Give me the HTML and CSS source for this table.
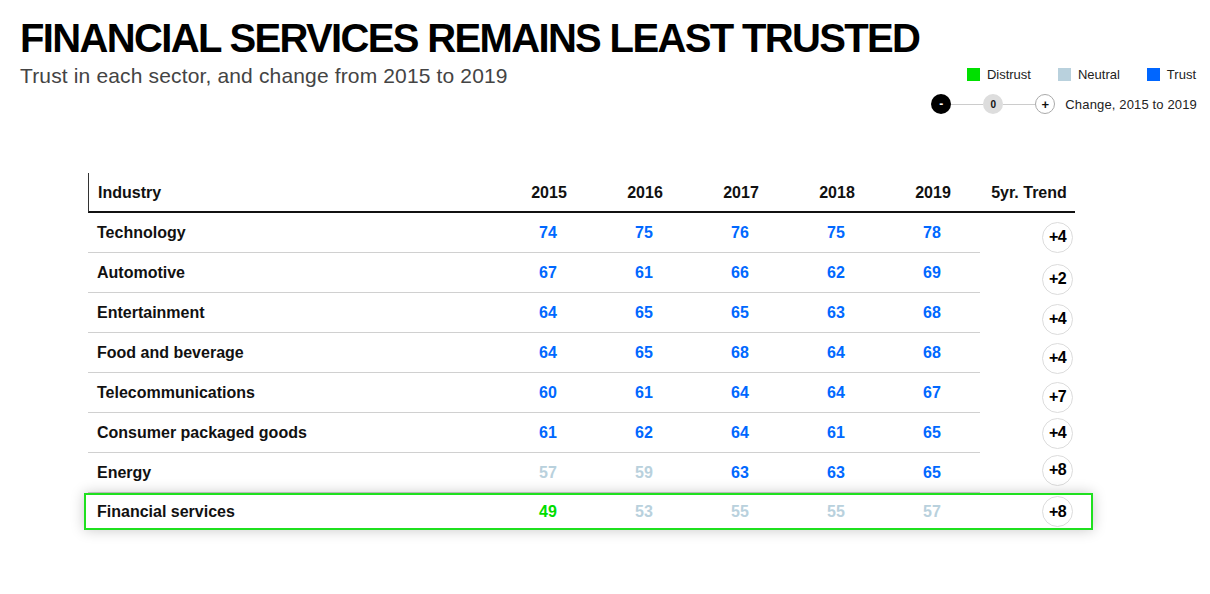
FILE: index.html
```html
<!DOCTYPE html>
<html>
<head>
<meta charset="utf-8">
<link rel="stylesheet" href="styles.css">
</head>
<body>
<header class="top">
  <div class="titles">
    <h1 class="title">FINANCIAL SERVICES REMAINS LEAST TRUSTED</h1>
    <p class="subtitle">Trust in each sector, and change from 2015 to 2019</p>
  </div>
  <div class="legend">
    <div class="legend-row">
      <span class="key"><span class="sq sq-distrust"></span>Distrust</span>
      <span class="key"><span class="sq sq-neutral"></span>Neutral</span>
      <span class="key"><span class="sq sq-trust"></span>Trust</span>
    </div>
    <div class="change-row">
      <span class="dot dot-minus">-</span>
      <span class="link"></span>
      <span class="dot dot-zero">0</span>
      <span class="link"></span>
      <span class="dot dot-plus">+</span>
      <span class="change-label">Change, 2015 to 2019</span>
    </div>
  </div>
</header>

<div class="table">
  <div class="row head">
    <div class="cell name">Industry</div>
    <div class="cell num">2015</div>
    <div class="cell num">2016</div>
    <div class="cell num">2017</div>
    <div class="cell num">2018</div>
    <div class="cell num">2019</div>
    <div class="cell trend-h">5yr. Trend</div>
  </div>
  <div class="row body">
    <div class="cell name">Technology</div>
    <div class="cell num t">74</div><div class="cell num t">75</div><div class="cell num t">76</div><div class="cell num t">75</div><div class="cell num t">78</div>
    <div class="trend"><span class="circle">+4</span></div>
  </div>
  <div class="row body">
    <div class="cell name">Automotive</div>
    <div class="cell num t">67</div><div class="cell num t">61</div><div class="cell num t">66</div><div class="cell num t">62</div><div class="cell num t">69</div>
    <div class="trend"><span class="circle">+2</span></div>
  </div>
  <div class="row body">
    <div class="cell name">Entertainment</div>
    <div class="cell num t">64</div><div class="cell num t">65</div><div class="cell num t">65</div><div class="cell num t">63</div><div class="cell num t">68</div>
    <div class="trend"><span class="circle">+4</span></div>
  </div>
  <div class="row body">
    <div class="cell name">Food and beverage</div>
    <div class="cell num t">64</div><div class="cell num t">65</div><div class="cell num t">68</div><div class="cell num t">64</div><div class="cell num t">68</div>
    <div class="trend"><span class="circle">+4</span></div>
  </div>
  <div class="row body">
    <div class="cell name">Telecommunications</div>
    <div class="cell num t">60</div><div class="cell num t">61</div><div class="cell num t">64</div><div class="cell num t">64</div><div class="cell num t">67</div>
    <div class="trend"><span class="circle">+7</span></div>
  </div>
  <div class="row body">
    <div class="cell name">Consumer packaged goods</div>
    <div class="cell num t">61</div><div class="cell num t">62</div><div class="cell num t">64</div><div class="cell num t">61</div><div class="cell num t">65</div>
    <div class="trend"><span class="circle">+4</span></div>
  </div>
  <div class="row body">
    <div class="cell name">Energy</div>
    <div class="cell num n">57</div><div class="cell num n">59</div><div class="cell num t">63</div><div class="cell num t">63</div><div class="cell num t">65</div>
    <div class="trend"><span class="circle">+8</span></div>
  </div>
  <div class="row highlight">
    <div class="cell name">Financial services</div>
    <div class="cell num d">49</div><div class="cell num n">53</div><div class="cell num n">55</div><div class="cell num n">55</div><div class="cell num n">57</div>
    <div class="trend"><span class="circle">+8</span></div>
  </div>
</div>
</body>
</html>
```

FILE: styles.css
```css
* { box-sizing: border-box; }

body {
  margin: 0;
  width: 1210px;
  height: 594px;
  background: #fff;
  font-family: "Liberation Sans", Arial, Helvetica, sans-serif;
  color: #111;
  overflow: hidden;
}

.top {
  display: flex;
  justify-content: space-between;
  align-items: flex-start;
  padding: 0 13px 0 20px;
  height: 114px;
}

.title {
  margin: 18px 0 0;
  font-size: 40px;
  line-height: 40px;
  font-weight: bold;
  letter-spacing: -1.65px;
  color: #000;
}

.subtitle {
  margin: 6px 0 0;
  font-size: 21px;
  line-height: 24px;
  letter-spacing: 0.15px;
  color: #444;
}

.legend {
  display: flex;
  flex-direction: column;
  align-items: flex-end;
  padding-top: 66px;
}

.legend-row {
  display: flex;
  gap: 27px;
  height: 16px;
  align-items: center;
  font-size: 13px;
  color: #222;
  margin-right: 1px;
}

.key {
  display: flex;
  align-items: center;
  gap: 7px;
}

.sq {
  width: 13px;
  height: 13px;
  display: inline-block;
}
.sq-distrust { background: #00e000; }
.sq-neutral { background: #b9d1dd; }
.sq-trust { background: #0066ff; }

.change-row {
  display: flex;
  align-items: center;
  margin-top: 12px;
  height: 20px;
  font-size: 13px;
  letter-spacing: 0.15px;
  color: #222;
}

.dot {
  width: 20px;
  height: 20px;
  border-radius: 50%;
  display: flex;
  align-items: center;
  justify-content: center;
  font-size: 10px;
  font-weight: bold;
  letter-spacing: 0;
}
.dot-minus { background: #000; color: #fff; font-size: 12px; }
.dot-zero { background: #ddd; color: #111; }
.dot-plus { background: #fff; border: 1px solid #aaa; color: #111; font-size: 13px; }

.link {
  width: 32px;
  height: 1px;
  background: #ccc;
}

.change-label {
  margin-left: 10px;
}

.table {
  margin: 59px 0 0 88px;
  width: 987px;
}

.row {
  display: grid;
  grid-template-columns: 412px repeat(5, 96px) 95px;
  height: 40px;
}

.cell {
  display: flex;
  align-items: center;
  font-size: 16px;
  font-weight: bold;
}

.name { padding-left: 9px; color: #111; }
.num { justify-content: center; }

.head {
  height: 40px;
  padding-top: 1px;
  border-left: 1px solid #333;
  border-bottom: 2px solid #111;
}
.head .cell { color: #111; }

.trend-h {
  justify-content: center;
  padding-left: 1px;
}

.body .cell { border-bottom: 1px solid #d0d0d0; }

.t { color: #0068ff; }
.n { color: #b9d1dd; }
.d { color: #00dd00; }

.trend {
  display: flex;
  align-items: center;
  padding-left: 62px;
}

.circle {
  width: 31px;
  height: 31px;
  border-radius: 50%;
  border: 1px solid #dcdcdc;
  background: #fff;
  display: flex;
  align-items: center;
  justify-content: center;
  font-size: 16px;
  font-weight: bold;
  color: #000;
  letter-spacing: -0.5px;
}

.body:nth-child(2) .circle { transform: translateY(4px); }
.body:nth-child(3) .circle { transform: translateY(6px); }
.body:nth-child(4) .circle { transform: translateY(6px); }
.body:nth-child(5) .circle { transform: translateY(5px); }
.body:nth-child(6) .circle { transform: translateY(4px); }
.body:nth-child(7) .circle { transform: translateY(0); }
.body:nth-child(8) .circle { transform: translateY(-3px); }

.highlight {
  position: relative;
  margin: 0 -18px 0 -4px;
  height: 37px;
  border: 2px solid #1fe01f;
  background: #fff;
  grid-template-columns: 414px repeat(5, 96px) 1fr;
  box-shadow: 0 0 14px rgba(0, 0, 0, 0.22);
}
.highlight .name { padding-left: 11px; }
.highlight .trend { padding-left: 62px; }
```
